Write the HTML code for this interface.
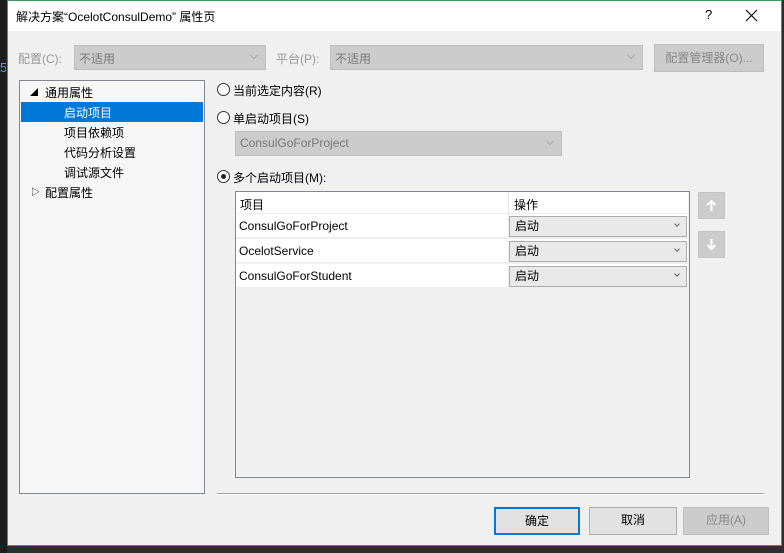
<!DOCTYPE html>
<html><head><meta charset="utf-8"><style>
*{box-sizing:border-box;margin:0;padding:0}
body{width:784px;height:553px;background:#2d2d30;position:relative;overflow:hidden;font-family:"Liberation Sans","Noto Sans CJK SC",sans-serif;font-size:12px;color:#000}
.a{position:absolute}
.dlg{left:7px;top:0;width:775px;height:546px;background:#f0f0f0;border:1px solid #3c9a5a}
.title{left:8px;top:1px;width:773px;height:30px;background:#fff}
.combo{background:#cccccc;border:1px solid #bdbdbd;color:#777}
.chev{position:absolute;right:8px;top:6px;width:6px;height:6px;border-right:1px solid #aaa;border-bottom:1px solid #aaa;transform:rotate(45deg)}
.radio{width:13px;height:13px;border:1px solid #333;border-radius:50%;background:#fff}
.btn{background:#e1e1e1;border:1px solid #adadad;text-align:center;line-height:25px}
.row{height:24px;border-bottom:1px solid #eee;background:#fff;position:absolute;left:0;width:452px}
.dd{position:absolute;left:273px;top:2px;width:178px;height:21px;background:#e9e9e9;border:1px solid #adadad;padding-left:5px;line-height:19px}
.dd i{position:absolute;right:7px;top:5px;width:4px;height:4px;border-right:1px solid #666;border-bottom:1px solid #666;transform:rotate(45deg)}
</style></head><body>
<div class="a" style="left:0;top:0;width:7px;height:553px;background:#1e1e1e"></div>
<div class="a" style="left:0;top:60px;width:6px;height:14px;color:#4aa0e0;font-size:13px;overflow:hidden">5</div>
<div class="a dlg"></div>
<div class="a title"></div>
<div class="a" style="left:16px;top:8px;font-size:12px">解决方案“OcelotConsulDemo” 属性页</div>
<div class="a" style="left:705px;top:7px;font-size:13px">?</div>
<svg class="a" style="left:745px;top:9px" width="13" height="13"><path d="M1 1L12 12M12 1L1 12" stroke="#000" stroke-width="1.1"/></svg>

<div class="a" style="left:18px;top:50px;color:#999">配置(C):</div>
<div class="a combo" style="left:74px;top:45px;width:192px;height:25px;padding:4px 4px"><span>不适用</span><i class="chev"></i></div>
<div class="a" style="left:276px;top:50px;color:#999">平台(P):</div>
<div class="a combo" style="left:330px;top:45px;width:313px;height:25px;padding:4px 4px"><span>不适用</span><i class="chev"></i></div>
<div class="a" style="left:654px;top:44px;width:110px;height:28px;background:#ccc;border:1px solid #bdbdbd;color:#888;text-align:center;line-height:26px">配置管理器(O)...</div>

<div class="a" style="left:19px;top:80px;width:186px;height:414px;background:#f6f6f6;border:1px solid #828790"></div>
<div class="a" style="left:30px;top:87px;font-size:8px">◢</div>
<div class="a" style="left:45px;top:84px">通用属性</div>
<div class="a" style="left:21px;top:102px;width:182px;height:20px;background:#0078d7"></div>
<div class="a" style="left:64px;top:104px;color:#fff">启动项目</div>
<div class="a" style="left:64px;top:124px">项目依赖项</div>
<div class="a" style="left:64px;top:144px">代码分析设置</div>
<div class="a" style="left:64px;top:164px">调试源文件</div>
<div class="a" style="left:31px;top:185px;font-size:9px">▷</div>
<div class="a" style="left:45px;top:184px">配置属性</div>

<div class="a radio" style="left:217px;top:83px"></div>
<div class="a" style="left:233px;top:82px">当前选定内容(R)</div>
<div class="a radio" style="left:217px;top:111px"></div>
<div class="a" style="left:233px;top:110px">单启动项目(S)</div>
<div class="a combo" style="left:235px;top:131px;width:327px;height:25px;padding:4px 4px;color:#777"><span>ConsulGoForProject</span><i class="chev"></i></div>
<div class="a radio" style="left:217px;top:170px"><div style="position:absolute;left:3px;top:3px;width:5px;height:5px;border-radius:50%;background:#222"></div></div>
<div class="a" style="left:233px;top:169px">多个启动项目(M):</div>

<div class="a" style="left:235px;top:191px;width:455px;height:287px;border:1px solid #828790;background:#f0f0f0">
 <div class="row" style="top:0;height:22px;background:#fff"><span class="a" style="left:4px;top:4px">项目</span><span class="a" style="left:272px;top:0;width:1px;height:22px;background:#e5e5e5"></span><span class="a" style="left:278px;top:4px">操作</span></div>
 <div class="row" style="top:22px"><span class="a" style="left:3px;top:5px">ConsulGoForProject</span><span class="a" style="left:272px;top:0;width:1px;height:24px;background:#eee"></span><div class="dd">启动<i></i></div></div>
 <div class="row" style="top:47px"><span class="a" style="left:3px;top:5px">OcelotService</span><span class="a" style="left:272px;top:0;width:1px;height:24px;background:#eee"></span><div class="dd">启动<i></i></div></div>
 <div class="row" style="top:72px"><span class="a" style="left:3px;top:5px">ConsulGoForStudent</span><span class="a" style="left:272px;top:0;width:1px;height:24px;background:#eee"></span><div class="dd">启动<i></i></div></div>
</div>
<div class="a" style="left:698px;top:192px;width:27px;height:27px;background:#ccc;border:1px solid #c4c4c4"><svg width="25" height="25"><path d="M12.5 8V18M8.5 12L12.5 8L16.5 12" stroke="#fff" stroke-width="2" fill="none"/></svg></div>
<div class="a" style="left:698px;top:231px;width:27px;height:27px;background:#ccc;border:1px solid #c4c4c4"><svg width="25" height="25"><path d="M12.5 7V17M8.5 13L12.5 17L16.5 13" stroke="#fff" stroke-width="2" fill="none"/></svg></div>

<div class="a" style="left:217px;top:493px;width:547px;height:1px;background:#a0a0a0"></div>
<div class="a" style="left:217px;top:494px;width:547px;height:1px;background:#fff"></div>

<div class="a btn" style="left:494px;top:507px;width:86px;height:28px;border:2px solid #0078d7;line-height:24px">确定</div>
<div class="a btn" style="left:589px;top:507px;width:88px;height:28px">取消</div>
<div class="a btn" style="left:683px;top:507px;width:86px;height:28px;background:#ccc;border-color:#bfbfbf;color:#888">应用(A)</div>
</body></html>
